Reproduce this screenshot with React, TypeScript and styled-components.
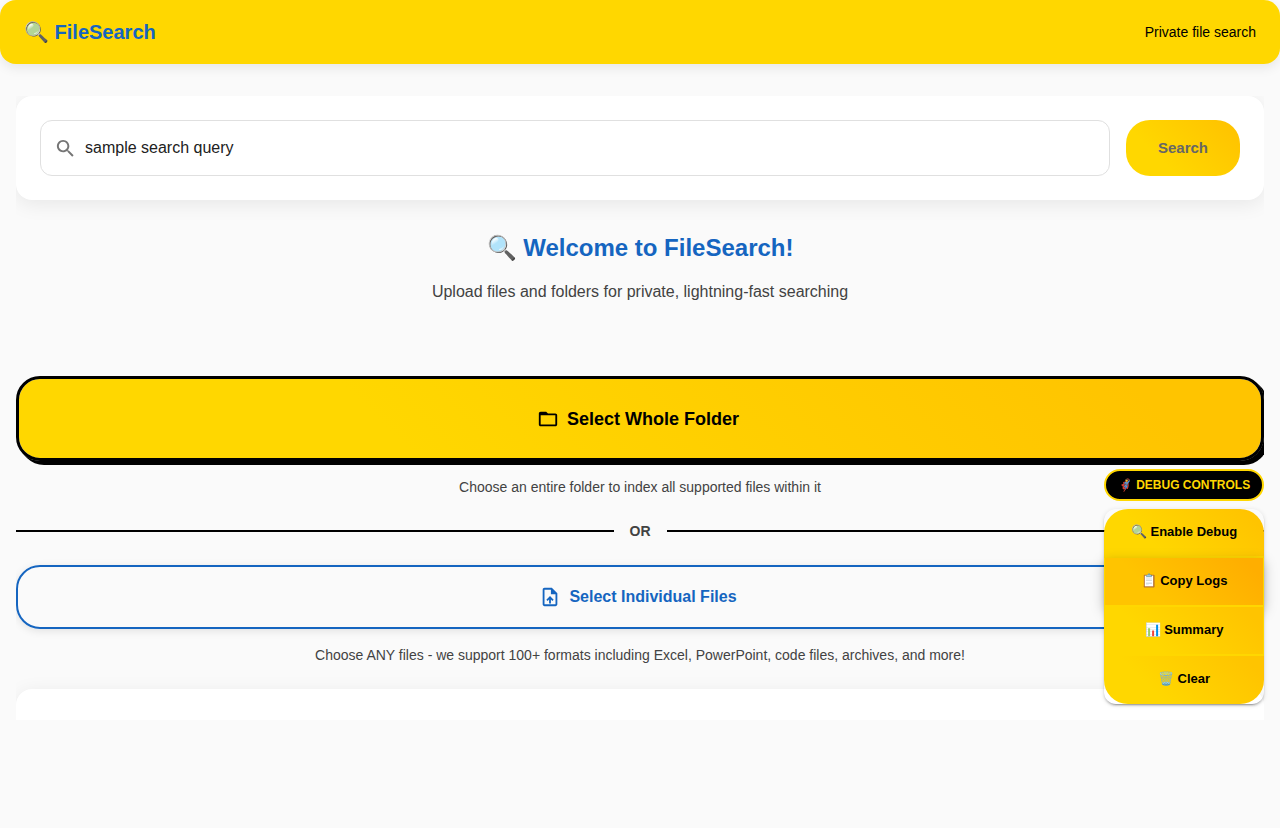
import React, { useState } from "react";
import styled, { createGlobalStyle, css } from "styled-components";

const gold = "#ffd700";
const amber = "#ffc400";
const blue = "#1565c0";
const goldFade = `linear-gradient(45deg, ${gold} 30%, ${amber} 90%)`;

const GlobalStyle = createGlobalStyle`
  *, *::before, *::after { box-sizing: border-box; }
  body {
    margin: 0;
    background: #fafafa;
    color: #212121;
    font-family: "Liberation Sans", Arial, sans-serif;
    font-size: 16px;
    line-height: 24px;
  }
  button, input { font-family: inherit; }
`;

const Page = styled.div`
  position: relative;
`;

const Header = styled.header`
  display: flex;
  align-items: center;
  justify-content: space-between;
  height: 64px;
  padding: 0 24px;
  border-radius: 16px;
  background: ${gold};
  box-shadow: 0 4px 12px rgba(0, 0, 0, 0.08);
`;

const Brand = styled.div`
  color: ${blue};
  font-size: 20px;
  font-weight: 700;
  line-height: 32px;
`;

const Tagline = styled.span`
  color: #000;
  font-size: 14px;
  line-height: 20px;
`;

const Main = styled.main`
  margin: 32px 16px 0;
  overflow: hidden;
`;

const Card = styled.section`
  border-radius: 16px;
  background: #fff;
  box-shadow: 0 4px 20px rgba(0, 0, 0, 0.08);
`;

const SearchForm = styled.form`
  display: flex;
  gap: 16px;
  padding: 24px;
`;

const SearchField = styled.label`
  display: flex;
  flex: 1;
  align-items: center;
  gap: 8px;
  height: 56px;
  padding: 0 13px;
  border: 1px solid #e0e0e0;
  border-radius: 12px;
  color: #757575;
`;

const SearchInput = styled.input`
  flex: 1;
  min-width: 0;
  height: 23px;
  padding: 0;
  border: 0;
  outline: 0;
  background: transparent;
  color: #212121;
  font-size: 16px;
`;

const SearchButton = styled.button`
  padding: 0 32px;
  border: 0;
  border-radius: 24px;
  background: ${goldFade};
  color: #666;
  font-size: 15px;
  font-weight: 700;
  line-height: 24px;
`;

const Intro = styled.section`
  padding: 32px 16px 72px;
  text-align: center;
`;

const Title = styled.h1`
  margin: 0 0 16px;
  color: ${blue};
  font-size: 24px;
  line-height: 32px;
`;

const Subtitle = styled.p`
  margin: 0;
  color: #424242;
`;

const PickButton = styled.button<{ $primary?: boolean }>`
  display: flex;
  align-items: center;
  justify-content: center;
  gap: 8px;
  width: 100%;
  border-radius: 24px;
  font-weight: 700;
  line-height: 24px;

  svg {
    margin-left: -4px;
  }

  ${(p) =>
    p.$primary
      ? css`
          height: 85px;
          border: 3px solid #000;
          background: ${goldFade} padding-box;
          box-shadow: 2px 2px 0 #000, 4px 4px 0 #000;
          color: #000;
          font-size: 18px;
        `
      : css`
          height: 64px;
          border: 2px solid ${blue};
          background: transparent;
          box-shadow: 0 2px 8px rgba(0, 0, 0, 0.1);
          color: ${blue};
          font-size: 16px;
        `}
`;

const Hint = styled.p`
  margin: 16px 0 24px;
  color: #424242;
  font-size: 14px;
  line-height: 20px;
  text-align: center;
`;

const Divider = styled.div`
  display: flex;
  align-items: center;
  gap: 16px;
  margin-bottom: 24px;
  color: #424242;
  font-size: 14px;
  font-weight: 700;
  line-height: 20px;

  &::before,
  &::after {
    content: "";
    flex: 1;
    height: 2px;
    background: #000;
  }
`;

const ResultsCard = styled(Card)`
  height: 31px;
  border-radius: 16px 16px 0 0;
`;

const DebugPanel = styled.aside`
  position: absolute;
  right: 16px;
  bottom: 16px;
  display: flex;
  flex-direction: column;
  gap: 8px;
  width: 160px;
`;

const DebugTitle = styled.div`
  height: 32px;
  border: 2px solid ${gold};
  border-radius: 16px;
  background: #000;
  color: ${gold};
  font-size: 12px;
  font-weight: 700;
  line-height: 28px;
  text-align: center;
  white-space: nowrap;
`;

const DebugGroup = styled.div`
  display: flex;
  flex-direction: column;
  border-radius: 12px;
  box-shadow:
    0 3px 1px -2px rgba(0, 0, 0, 0.2),
    0 2px 2px rgba(0, 0, 0, 0.14),
    0 1px 5px rgba(0, 0, 0, 0.12);
`;

const DebugButton = styled.button<{ $strong?: boolean }>`
  height: 49px;
  padding: 0 8px 1px;
  border: solid ${gold};
  border-width: 0 1px 2px;
  background: ${(p) =>
    p.$strong ? "linear-gradient(45deg, #ffc400 30%, #ffae00 90%)" : goldFade};
  background-origin: border-box;
  box-shadow: ${(p) => (p.$strong ? "0 4px 12px rgba(0, 0, 0, 0.25)" : "none")};
  color: #000;
  font-size: 13px;
  font-weight: 700;
  line-height: 24px;

  &:first-child {
    border-right-width: 0;
    border-left-width: 0;
    border-radius: 24px 24px 0 0;
  }
  &:last-child {
    height: 48px;
    padding-bottom: 2px;
    border-width: 0;
    border-radius: 0 0 24px 24px;
  }
`;

const Icon = ({ path, size = 22 }: { path: string; size?: number }) => (
  <svg width={size} height={size} viewBox="0 0 24 24" fill="currentColor" aria-hidden="true">
    <path d={path} />
  </svg>
);

const searchPath =
  "M15.5 14h-.79l-.28-.27C15.41 12.59 16 11.11 16 9.5 16 5.91 13.09 3 9.5 3S3 5.91 3 9.5 5.91 16 9.5 16c1.61 0 3.09-.59 4.23-1.57l.27.28v.79l5 4.99L20.49 19zm-6 0C7.01 14 5 11.99 5 9.5S7.01 5 9.5 5 14 7.01 14 9.5 11.99 14 9.5 14";
const folderPath =
  "M20 6h-8l-2-2H4c-1.1 0-1.99.9-1.99 2L2 18c0 1.1.9 2 2 2h16c1.1 0 2-.9 2-2V8c0-1.1-.9-2-2-2m0 12H4V8h16z";
const uploadPath =
  "M14 2H6c-1.1 0-1.99.9-1.99 2L4 20c0 1.1.89 2 1.99 2H18c1.1 0 2-.9 2-2V8zm4 18H6V4h7v5h5zM8 15.01l1.41 1.41L11 14.84V19h2v-4.16l1.59 1.59L16 15.01 12.01 11z";

const debugActions = [
  { label: "🔍 Enable Debug" },
  { label: "📋 Copy Logs", strong: true },
  { label: "📊 Summary" },
  { label: "🗑️ Clear" },
];

export default function App() {
  const [query, setQuery] = useState("sample search query");

  return (
    <>
      <GlobalStyle />
      <Page>
        <Header>
          <Brand>🔍 FileSearch</Brand>
          <Tagline>Private file search</Tagline>
        </Header>
        <Main>
          <Card>
            <SearchForm onSubmit={(e) => e.preventDefault()}>
              <SearchField>
                <Icon path={searchPath} size={23} />
                <SearchInput
                  type="text"
                  aria-label="Search files"
                  value={query}
                  onChange={(e) => setQuery(e.target.value)}
                />
              </SearchField>
              <SearchButton type="submit">Search</SearchButton>
            </SearchForm>
          </Card>
          <Intro>
            <Title>🔍 Welcome to FileSearch!</Title>
            <Subtitle>Upload files and folders for private, lightning-fast searching</Subtitle>
          </Intro>
          <PickButton type="button" $primary>
            <Icon path={folderPath} />
            Select Whole Folder
          </PickButton>
          <Hint>Choose an entire folder to index all supported files within it</Hint>
          <Divider>OR</Divider>
          <PickButton type="button">
            <Icon path={uploadPath} />
            Select Individual Files
          </PickButton>
          <Hint>
            Choose ANY files - we support 100+ formats including Excel, PowerPoint, code files,
            archives, and more!
          </Hint>
          <ResultsCard />
        </Main>
        <DebugPanel aria-label="Debug controls">
          <DebugTitle>🦸 DEBUG CONTROLS</DebugTitle>
          <DebugGroup>
            {debugActions.map((a) => (
              <DebugButton key={a.label} type="button" $strong={a.strong}>
                {a.label}
              </DebugButton>
            ))}
          </DebugGroup>
        </DebugPanel>
      </Page>
    </>
  );
}
